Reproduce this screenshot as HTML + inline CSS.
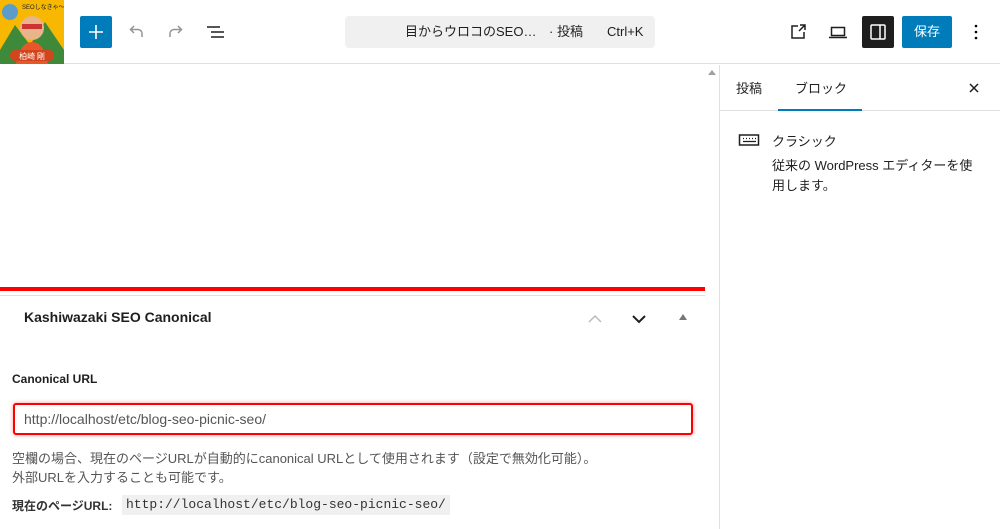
<!DOCTYPE html>
<html><head><meta charset="utf-8"><style>
*{box-sizing:border-box;margin:0;padding:0}
body{width:1000px;height:529px;overflow:hidden;background:#fff;font-family:"Liberation Sans","Noto Sans CJK JP",sans-serif;color:#1e1e1e;position:relative}
.abs{position:absolute}
</style></head><body>
<div class="abs" style="left:0;top:0;width:1000px;height:64px;border-bottom:1px solid #e0e0e0"></div>
<div class="abs" style="left:0;top:0;width:64px;height:64px;background:#f7b500;overflow:hidden">
<svg width="64" height="64" viewBox="0 0 64 64"><rect width="64" height="64" fill="#f8b700"/><path d="M0 50 L15 25 L30 45 L45 22 L64 50 V64 H0Z" fill="#3f8a3a"/><circle cx="32" cy="28" r="12" fill="#e9b48a"/><rect x="22" y="24" width="20" height="5" fill="#c33"/><path d="M16 64 Q20 42 32 42 Q44 42 48 64Z" fill="#e8562a"/><circle cx="10" cy="12" r="8" fill="#5a9dc8"/><rect x="10" y="50" width="44" height="11" rx="5" fill="#d2461d"/><text x="32" y="59" font-size="8" fill="#fff" text-anchor="middle" font-family="Noto Sans CJK JP">柏崎 剛</text><text x="22" y="9" font-size="6" fill="#222">SEOしなきゃ〜</text></svg></div>
<div class="abs" style="left:80px;top:16px;width:32px;height:32px;background:#007cba;border-radius:2px"><svg width="32" height="32"><path d="M16 9v14M9 16h14" stroke="#fff" stroke-width="1.6"/></svg></div>
<svg class="abs" style="left:124px;top:20px" width="24" height="24"><path d="M18 17V13.5a4 4 0 0 0-4-4H7M10 6L6.5 9.5 10 13" fill="none" stroke="#949494" stroke-width="1.5"/></svg>
<svg class="abs" style="left:164px;top:20px" width="24" height="24"><path d="M6 17V13.5a4 4 0 0 1 4-4h7M14 6l3.5 3.5L14 13" fill="none" stroke="#949494" stroke-width="1.5"/></svg>
<svg class="abs" style="left:204px;top:20px" width="24" height="24"><path d="M3 7h13M7 12h13M7 17h13" stroke="#1e1e1e" stroke-width="1.5"/></svg>
<div class="abs" style="left:345px;top:16px;width:310px;height:32px;background:#f0f0f0;border-radius:4px;font-size:13px;line-height:32px;color:#1e1e1e">
<span class="abs" style="left:60px">目からウロコのSEO…</span><span class="abs" style="left:204px">· 投稿</span><span class="abs" style="left:262px">Ctrl+K</span></div>
<svg class="abs" style="left:786px;top:20px" width="24" height="24"><path d="M12 6H6v12h12v-6M13 11l6-6M14 5h5v5" fill="none" stroke="#1e1e1e" stroke-width="1.5"/></svg>
<svg class="abs" style="left:826px;top:20px" width="24" height="24"><path d="M5.5 7.5h13v8h-13zM3 17.5h18" fill="none" stroke="#1e1e1e" stroke-width="1.5"/></svg>
<div class="abs" style="left:862px;top:16px;width:32px;height:32px;background:#1e1e1e;border-radius:2px"><svg width="32" height="32"><rect x="9" y="9" width="14" height="14" rx="1" fill="none" stroke="#fff" stroke-width="1.5"/><path d="M18 9v14" stroke="#fff" stroke-width="1.5"/></svg></div>
<div class="abs" style="left:902px;top:16px;width:50px;height:32px;background:#007cba;border-radius:2px;color:#fff;font-size:13px;line-height:32px;text-align:center">保存</div>
<svg class="abs" style="left:964px;top:20px" width="24" height="24"><circle cx="12" cy="6" r="1.3"/><circle cx="12" cy="12" r="1.3"/><circle cx="12" cy="18" r="1.3"/></svg>
<div class="abs" style="left:705px;top:65px;width:14px;height:464px;background:#fff"></div>
<div class="abs" style="left:708px;top:70px;width:0;height:0;border-left:4px solid transparent;border-right:4px solid transparent;border-bottom:5px solid #a0a0a0"></div>
<div class="abs" style="left:719px;top:65px;width:1px;height:464px;background:#e0e0e0"></div>
<div class="abs" style="left:720px;top:110px;width:280px;height:1px;background:#e0e0e0"></div>
<div class="abs" style="left:736px;top:78px;font-size:13px;color:#1e1e1e">投稿</div>
<div class="abs" style="left:795px;top:78px;font-size:13px;color:#1e1e1e">ブロック</div>
<div class="abs" style="left:778px;top:109px;width:84px;height:2px;background:#007cba"></div>
<svg class="abs" style="left:966px;top:80px" width="16" height="16"><path d="M4 4l8 8M12 4l-8 8" stroke="#1e1e1e" stroke-width="1.5"/></svg>
<svg class="abs" style="left:738px;top:132px" width="22" height="16"><rect x="1.5" y="3" width="19" height="10" fill="none" stroke="#1e1e1e" stroke-width="1.5"/><path d="M5 6.5h1M8 6.5h1M11 6.5h1M14 6.5h1M17 6.5h1M5 9.5h13" stroke="#1e1e1e" stroke-width="1.3"/></svg>
<div class="abs" style="left:772px;top:131px;font-size:13px">クラシック</div>
<div class="abs" style="left:772px;top:156px;width:210px;font-size:13px;line-height:20px">従来の WordPress エディターを使用します。</div>
<div class="abs" style="left:0;top:287px;width:705px;height:4px;background:#f00"></div>
<div class="abs" style="left:0;top:295px;width:705px;height:1px;background:#e0e0e0"></div>
<div class="abs" style="left:24px;top:309px;font-size:14px;font-weight:bold;color:#1e1e1e">Kashiwazaki SEO Canonical</div>
<svg class="abs" style="left:586px;top:310px" width="18" height="18"><path d="M3 12l6-6 6 6" fill="none" stroke="#bbb" stroke-width="1.5"/></svg>
<svg class="abs" style="left:630px;top:310px" width="18" height="18"><path d="M3 6l6 6 6-6" fill="none" stroke="#1e1e1e" stroke-width="2"/></svg>
<div class="abs" style="left:679px;top:314px;width:0;height:0;border-left:4px solid transparent;border-right:4px solid transparent;border-bottom:6px solid #777"></div>
<div class="abs" style="left:12px;top:372px;font-size:12px;font-weight:bold;color:#1e1e1e">Canonical URL</div>
<div class="abs" style="left:13px;top:403px;width:680px;height:32px;border:2px solid #f00;border-radius:3px;box-shadow:0 0 4px rgba(255,0,0,.4);font-size:14px;color:#555;line-height:28px;padding-left:9px">http://localhost/etc/blog-seo-picnic-seo/</div>
<div class="abs" style="left:12px;top:449px;font-size:13px;line-height:19px;color:#555">空欄の場合、現在のページURLが自動的にcanonical URLとして使用されます（設定で無効化可能）。<br>外部URLを入力することも可能です。</div>
<div class="abs" style="left:12px;top:497px;font-size:12px;font-weight:bold;color:#333">現在のページURL:</div>
<div class="abs" style="left:122px;top:495px;height:20px;padding:0 4px;background:#f0f0f0;font-family:'Liberation Mono',monospace;font-size:13px;line-height:20px;color:#333">http://localhost/etc/blog-seo-picnic-seo/</div>
</body></html>
